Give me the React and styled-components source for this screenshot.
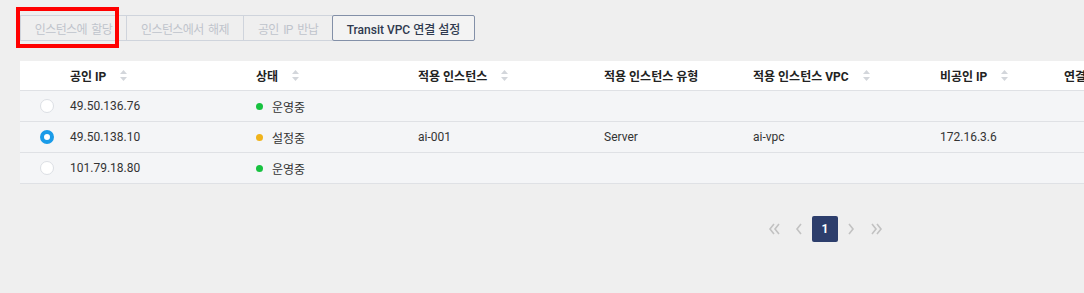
import styled, { createGlobalStyle } from "styled-components";

const GlobalStyle = createGlobalStyle`
  html, body {
    margin: 0;
    padding: 0;
    background: #efefef;
  }
  body {
    font-family: Roboto, "Noto Sans CJK KR", sans-serif;
    font-size: 12px;
    color: #333;
  }
`;

const Page = styled.div`
  padding: 15px 0 0 20px;
  width: 1064px;
  height: 278px;
  overflow: hidden;
`;

const Toolbar = styled.div`
  display: flex;
  height: 26px;
`;

const ActionButton = styled.button`
  position: relative;
  box-sizing: border-box;
  width: ${({ $w }) => $w}px;
  height: 26px;
  padding: 0;
  margin-left: -1px;
  font-family: inherit;
  font-size: 12px;
  white-space: nowrap;
  letter-spacing: ${({ $active }) => ($active ? "0" : "-0.6px")};
  word-spacing: ${({ $active }) => ($active ? "0" : "2px")};
  background: ${({ $active }) => ($active ? "#f3f3f3" : "#efefef")};
  color: ${({ $active }) => ($active ? "#2f3a4f" : "#bfc4cc")};
  border: 1px solid ${({ $active }) => ($active ? "#8390a8" : "#cfd4dc")};
  border-radius: ${({ $active }) => ($active ? "2px" : "0")};
  z-index: ${({ $active }) => ($active ? 1 : 0)};
  font-weight: ${({ $active }) => ($active ? 500 : 400)};
  &:first-child {
    margin-left: 0;
  }
`;

const Highlight = styled.span`
  position: absolute;
  left: -5px;
  top: -9px;
  width: 95px;
  height: 33px;
  border: 4px solid #ff0000;
  pointer-events: none;
`;

const Table = styled.div`
  margin-top: 20px;
  width: 1064px;
`;

const Row = styled.div`
  box-sizing: border-box;
  display: grid;
  grid-template-columns: 38px 186px 162px 186px 149px 187px 124px 1fr;
  align-items: center;
  height: ${({ $head }) => ($head ? "30px" : "31px")};
  background: ${({ $head }) => ($head ? "#ffffff" : "#f4f5f7")};
  border-bottom: 1px solid #dfe1e5;
  font-weight: ${({ $head }) => ($head ? 700 : 400)};
  color: ${({ $head }) => ($head ? "#222" : "#333")};
  white-space: nowrap;
`;

const Cell = styled.div`
  display: flex;
  align-items: center;
  padding-left: 12px;
  gap: 6px;
  overflow: hidden;
`;

const RadioCell = styled.div`
  display: flex;
  justify-content: flex-end;
  padding-right: 4px;
`;

const Radio = styled.span`
  box-sizing: border-box;
  width: 14px;
  height: 14px;
  border-radius: 50%;
  background: #fff;
  border: ${({ $checked }) =>
    $checked ? "4px solid #1a9be8" : "1px solid #dcdfe4"};
`;

const SortIcon = styled.svg`
  margin-left: 8px;
`;

const Dot = styled.span`
  width: 7px;
  height: 7px;
  border-radius: 50%;
  background: ${({ $color }) => $color};
  margin-right: 3px;
`;

const Pager = styled.div`
  display: flex;
  align-items: center;
  gap: 1px;
  margin-top: 32px;
  padding-left: 742px;
`;

const PageArrow = styled.span`
  display: flex;
  align-items: center;
  justify-content: center;
  width: 24px;
  height: 26px;
`;

const PageNum = styled.span`
  display: flex;
  align-items: center;
  justify-content: center;
  width: 26px;
  height: 26px;
  border-radius: 2px;
  background: #2d3e6c;
  color: #fff;
  font-weight: 700;
  font-size: 12px;
`;

function Sort() {
  return (
    <SortIcon width="7" height="11" viewBox="0 0 7 11">
      <path d="M3.5 0 L7 4 L0 4 Z" fill="#d3d6db" />
      <path d="M3.5 11 L7 7 L0 7 Z" fill="#d3d6db" />
    </SortIcon>
  );
}

function Chevron({ dir, double }) {
  const d = dir === "left" ? "M6 1 L2 6 L6 11" : "M2 1 L6 6 L2 11";
  return (
    <svg width={double ? 13 : 8} height="12" viewBox={`0 0 ${double ? 13 : 8} 12`}>
      <path d={d} fill="none" stroke="#c2c2c2" strokeWidth="1.6" />
      {double && (
        <path
          d={d}
          transform="translate(5 0)"
          fill="none"
          stroke="#c2c2c2"
          strokeWidth="1.6"
        />
      )}
    </svg>
  );
}

const columns = [
  { label: "공인 IP", sort: true },
  { label: "상태", sort: true },
  { label: "적용 인스턴스", sort: true },
  { label: "적용 인스턴스 유형" },
  { label: "적용 인스턴스 VPC", sort: true },
  { label: "비공인 IP", sort: true },
  { label: "연결" },
];

const rows = [
  { ip: "49.50.136.76", status: "운영중", color: "#17c240" },
  {
    ip: "49.50.138.10",
    status: "설정중",
    color: "#f0b31b",
    checked: true,
    instance: "ai-001",
    type: "Server",
    vpc: "ai-vpc",
    privateIp: "172.16.3.6",
  },
  { ip: "101.79.18.80", status: "운영중", color: "#17c240" },
];

export default function App() {
  return (
    <>
      <GlobalStyle />
      <Page>
        <Toolbar>
          <ActionButton $w={107}>
            인스턴스에 할당
            <Highlight />
          </ActionButton>
          <ActionButton $w={118}>인스턴스에서 해제</ActionButton>
          <ActionButton $w={90}>공인 IP 반납</ActionButton>
          <ActionButton $w={143} $active>
            Transit VPC 연결 설정
          </ActionButton>
        </Toolbar>

        <Table>
          <Row $head>
            <div />
            {columns.map((c) => (
              <Cell key={c.label}>
                {c.label}
                {c.sort && <Sort />}
              </Cell>
            ))}
          </Row>
          {rows.map((r) => (
            <Row key={r.ip}>
              <RadioCell>
                <Radio $checked={r.checked} />
              </RadioCell>
              <Cell>{r.ip}</Cell>
              <Cell>
                <Dot $color={r.color} />
                {r.status}
              </Cell>
              <Cell>{r.instance}</Cell>
              <Cell>{r.type}</Cell>
              <Cell>{r.vpc}</Cell>
              <Cell>{r.privateIp}</Cell>
              <Cell />
            </Row>
          ))}
        </Table>

        <Pager>
          <PageArrow>
            <Chevron dir="left" double />
          </PageArrow>
          <PageArrow>
            <Chevron dir="left" />
          </PageArrow>
          <PageNum>1</PageNum>
          <PageArrow>
            <Chevron dir="right" />
          </PageArrow>
          <PageArrow>
            <Chevron dir="right" double />
          </PageArrow>
        </Pager>
      </Page>
    </>
  );
}
